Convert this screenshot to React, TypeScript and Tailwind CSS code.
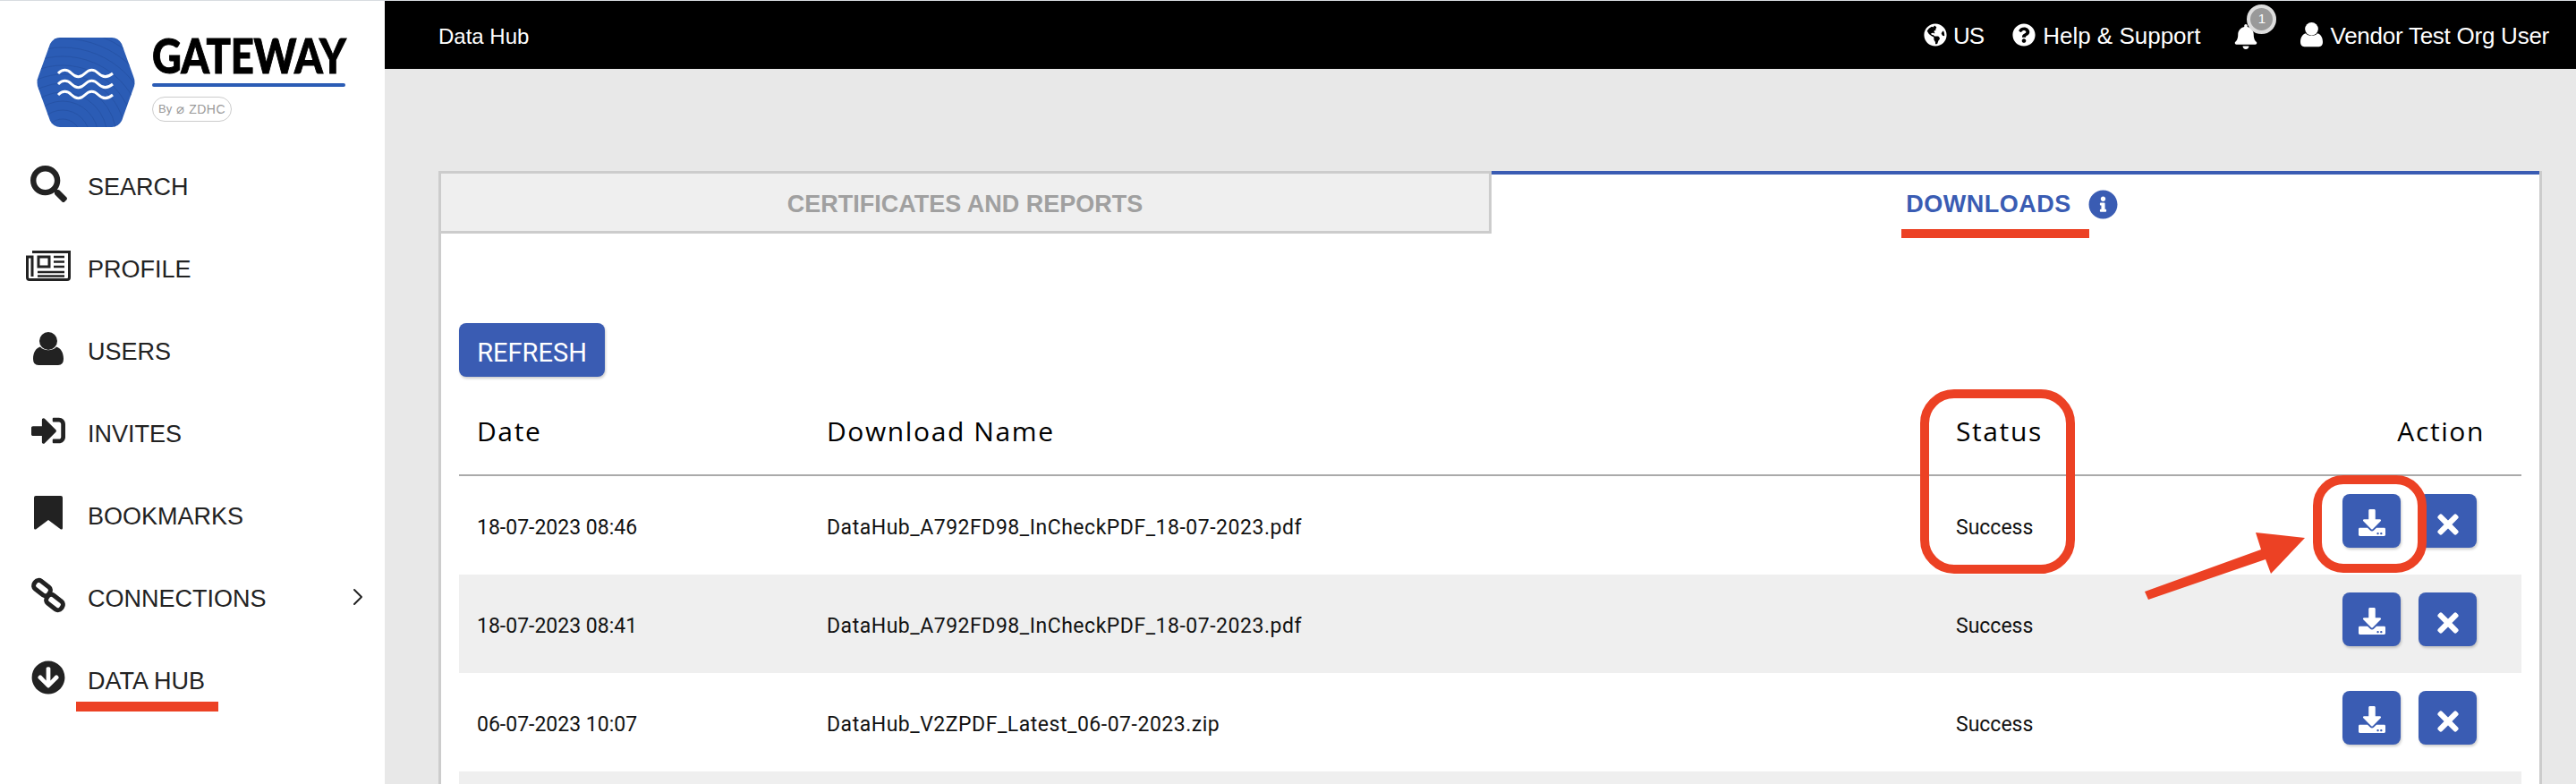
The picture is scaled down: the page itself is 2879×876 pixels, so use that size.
import React from "react";
import { ChevronRight } from "lucide-react";
import {
  FaArrowCircleDown,
  FaBell,
  FaDownload,
  FaGlobeAmericas,
  FaInfoCircle,
  FaQuestionCircle,
  FaSearch,
  FaSignInAlt,
  FaTimes,
} from "react-icons/fa";

const UserIcon = ({ size, className }: { size: number; className?: string }) => (
  <svg width={size} height={(size * 37) / 34} viewBox="0 0 34 37" fill="currentColor" className={className}>
    <circle cx="17" cy="10" r="10" />
    <path d="M0 30C0 23 3 18 8 16.500C12 21.500 22 21.500 26 16.500C31 18 34 23 34 30Q34 37 28 37H6Q0 37 0 30Z" />
  </svg>
);

const NewspaperIcon = () => (
  <svg width="50" height="34" viewBox="0 0 50 34" fill="none" stroke="currentColor" strokeWidth="3">
    <path d="M7 1.500H48.500V30Q48.500 32.500 46 32.500H4Q1.500 32.500 1.500 30V7H7V29" />
    <rect x="14" y="7" width="12" height="11" />
    <path d="M31 7H43M31 12.500H43M31 18H43M13 24H43M13 28.500H43" strokeWidth="2.500" />
  </svg>
);

const BookmarkIcon = () => (
  <svg width="32" height="38" viewBox="0 0 32 38" fill="currentColor">
    <path d="M2 0H30Q32 0 32 2V36Q32 38 30 37.500L16 27L2 37.500Q0 38 0 36V2Q0 0 2 0Z" />
  </svg>
);

const ChainIcon = () => (
  <svg width="40" height="40" viewBox="0 0 40 40" fill="none" stroke="currentColor" strokeWidth="5">
    <rect x="3" y="6.500" width="20" height="11" rx="4.500" transform="rotate(38 13 12)" />
    <rect x="17" y="22.500" width="20" height="11" rx="4.500" transform="rotate(38 27 28)" />
  </svg>
);

const navItems = [
  { label: "SEARCH", icon: <FaSearch size={41} /> },
  { label: "PROFILE", icon: <NewspaperIcon /> },
  { label: "USERS", icon: <UserIcon size={34} /> },
  { label: "INVITES", icon: <FaSignInAlt size={38} /> },
  { label: "BOOKMARKS", icon: <BookmarkIcon /> },
  { label: "CONNECTIONS", icon: <ChainIcon />, more: true },
  { label: "DATA HUB", icon: <FaArrowCircleDown size={38} /> },
];

const downloads = [
  { date: "18-07-2023 08:46", name: "DataHub_A792FD98_InCheckPDF_18-07-2023.pdf", status: "Success" },
  { date: "18-07-2023 08:41", name: "DataHub_A792FD98_InCheckPDF_18-07-2023.pdf", status: "Success" },
  { date: "06-07-2023 10:07", name: "DataHub_V2ZPDF_Latest_06-07-2023.zip", status: "Success" },
];

const wave = "c5 -5 10 -5 15 0 s10 5 15 0 s10 -5 15 0 s10 5 16 0";

const Logo = () => (
  <svg width="112" height="102" viewBox="0 0 112 102" className="shrink-0">
    <defs>
      <clipPath id="hex">
        <path d="M27 1H85Q92 1 96 8L109 44Q112 51 109 58L96 94Q92 101 85 101H27Q20 101 16 94L3 58Q0 51 3 44L16 8Q20 1 27 1Z" />
      </clipPath>
    </defs>
    <path
      d="M27 1H85Q92 1 96 8L109 44Q112 51 109 58L96 94Q92 101 85 101H27Q20 101 16 94L3 58Q0 51 3 44L16 8Q20 1 27 1Z"
      fill="#2b5cb5"
    />
    <g fill="none" stroke="#2653a6" strokeWidth="1" clipPath="url(#hex)">
      {[20, 30, 40, 50, 60, 70, 80, 90, 100, 110, 120, 130].map((r) => (
        <circle key={r} cx="30" cy="112" r={r} />
      ))}
    </g>
    <g fill="none" stroke="#fff" strokeWidth="3">
      <path d={`M25 41${wave}`} />
      <path d={`M25 53${wave}`} />
      <path d={`M25 65${wave}`} />
    </g>
  </svg>
);

const Sidebar = () => (
  <aside className="w-[430px] shrink-0 bg-white text-[#222] font-['Liberation_Sans',Arial,sans-serif]">
    <div className="flex gap-[18px] pl-[40px] pt-[40px]">
      <Logo />
      <div className="w-[220px] pt-[1px]">
        <div className="flex h-[40px] w-[218px] items-center">
          <span className="origin-left scale-x-[0.84] text-[54px] leading-none font-black tracking-[-0.3px] text-black font-['Lato',sans-serif] [-webkit-text-stroke:1px_black]">
            GATEWAY
          </span>
        </div>
        <div className="mt-[11px] h-[4px] w-[216px] rounded-full bg-[#2b5cb5]" />
        <div className="mt-[11px] flex h-[28px] w-[89px] items-center justify-center gap-[5px] rounded-full border border-[#ccc] text-[13px] text-[#999]">
          <span>By</span>
          <span className="text-[15px]">⌀</span>
          <span className="text-[14px] tracking-[0.5px]">ZDHC</span>
        </div>
      </div>
    </div>

    <nav className="mt-[20px]">
      {navItems.map((item) => (
        <div key={item.label} className="flex h-[92px] items-center">
          <div className="mb-2 ml-[28px] flex w-[52px] justify-center">{item.icon}</div>
          <span className="ml-[18px] text-[27px]">{item.label}</span>
          {item.more && (
            <ChevronRight size={32} strokeWidth={1.5} className="mb-1 ml-auto mr-[14px]" />
          )}
        </div>
      ))}
    </nav>
  </aside>
);

const Topbar = () => (
  <header className="flex h-[76px] items-center justify-between bg-black pl-[60px] pr-[30px] text-white font-['Liberation_Sans',Arial,sans-serif]">
    <span className="pt-[4px] text-[24px]">Data Hub</span>
    <div className="flex items-center text-[26px]">
      <FaGlobeAmericas size={26} />
      <span className="ml-[7px] pt-[3px] tracking-[-1px]">US</span>
      <FaQuestionCircle size={26} className="ml-[32px]" />
      <span className="ml-[8px] pt-[3px]">Help &amp; Support</span>
      <div className="relative ml-[37px] pt-[3px]">
        <FaBell size={28} />
        <span className="absolute -top-[19px] left-[15px] flex h-[33px] w-[33px] items-center justify-center rounded-full border-[4px] border-[#ddd] bg-[#999] text-[15px]">
          1
        </span>
      </div>
      <UserIcon size={25} className="ml-[47px]" />
      <span className="ml-[8px] pt-[3px] tracking-[-0.25px]">Vendor Test Org User</span>
    </div>
  </header>
);

const Tabs = () => (
  <div className="grid grid-cols-[1174px_1fr] text-[27px] font-bold font-['Liberation_Sans',Arial,sans-serif]">
    <div className="flex h-[70px] items-center justify-center border-y-[3px] border-r-[3px] border-[#ccc] bg-[#efefef] pt-[5px] text-[#a0a0a0]">
      CERTIFICATES AND REPORTS
    </div>
    <div className="flex h-[70px] items-center justify-center gap-[19px] border-t-4 border-[#3a5cb3] pr-[8px] text-[#3a5cb3]">
      <span className="pt-[1px] tracking-[0.5px]">DOWNLOADS</span>
      <FaInfoCircle size={33} />
    </div>
  </div>
);

const DownloadsTable = () => (
  <div className="px-[20px] pt-[100px]">
    <button className="h-[60px] w-[163px] rounded-lg bg-[#3a5cb3] pt-2 text-[29px] text-white shadow-[1px_2px_3px_rgba(0,0,0,0.2)] font-['Roboto',sans-serif]">
      REFRESH
    </button>

    <div className="mt-[13px] grid h-[98px] grid-cols-[391px_1262px_1fr_auto] items-center border-b-2 border-[#aaa] pb-[2px] text-[30px] tracking-[1.6px] text-black font-['Open_Sans',sans-serif]">
      <div className="pl-[20px]">Date</div>
      <div className="pl-[20px]">Download Name</div>
      <div className="pl-[20px]">Status</div>
      <div className="pr-[41px] text-right">Action</div>
    </div>

    {downloads.map((row, i) => (
      <div
        key={i}
        className={`grid h-[110px] grid-cols-[391px_1262px_1fr_auto] items-center text-[23px] text-[#111] font-['Roboto',sans-serif] ${
          i % 2 === 1 ? "bg-[#efefef]" : "bg-white"
        }`}
      >
        <div className="pl-[20px] pt-[6px]">{row.date}</div>
        <div className="pl-[20px] pt-[6px] tracking-[0.52px]">{row.name}</div>
        <div className="pl-[20px] pt-[6px]">{row.status}</div>
        <div className="flex gap-[20px] pb-[10px] pr-[50px]">
          <button className="flex h-[60px] w-[65px] items-center justify-center rounded-lg bg-[#3a5cb3] pt-[4px] text-white shadow-[1px_2px_3px_rgba(0,0,0,0.2)]">
            <FaDownload size={30} />
          </button>
          <button className="flex h-[60px] w-[65px] items-center justify-center rounded-lg bg-[#3a5cb3] pt-[8px] text-white shadow-[1px_2px_3px_rgba(0,0,0,0.2)]">
            <FaTimes size={34} />
          </button>
        </div>
      </div>
    ))}
    <div className="h-[110px] bg-[#efefef]" />
  </div>
);

// red marks drawn on top of the screenshot
const Annotations = () => (
  <>
    <div className="absolute left-[85px] top-[783px] h-[11px] w-[159px] bg-[#ec4124]" />
    <div className="absolute left-[2125px] top-[255px] h-[10px] w-[210px] bg-[#ec4124]" />
    <div className="absolute left-[2146px] top-[434px] h-[206px] w-[173px] rounded-[38px] border-[10px] border-[#ec4124]" />
    <div className="absolute left-[2585px] top-[530px] h-[109px] w-[127px] rounded-[34px] border-[10px] border-[#ec4124]" />
    <svg className="absolute left-[2390px] top-[590px]" width="190" height="85" viewBox="2390 590 190 85">
      <path
        d="M2397 660L2527 613L2521 594L2576 600L2538 640L2532 624L2401 669Z"
        fill="#ec4124"
      />
    </svg>
  </>
);

const App = (): React.JSX.Element => {
  return (
    <div className="relative flex h-[876px] w-[2879px] overflow-hidden border-t border-[#d8dce0]">
      <Sidebar />
      <div className="flex-1 bg-[#e8e8e8]">
        <Topbar />
        <main className="pl-[60px] pr-[38px] pt-[114px]">
          <div className="h-[800px] border-x-[3px] border-[#ccc] bg-white">
            <Tabs />
            <DownloadsTable />
          </div>
        </main>
      </div>
      <Annotations />
    </div>
  );
};

export default App;
